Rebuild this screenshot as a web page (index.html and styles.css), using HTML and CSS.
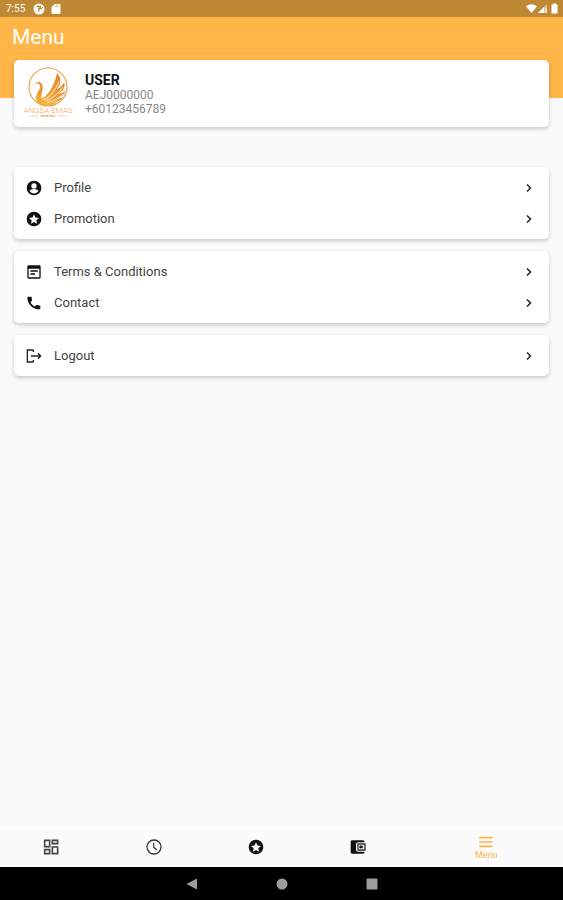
FILE: index.html
```html
<!DOCTYPE html>
<html lang="en">
<head>
<meta charset="utf-8">
<meta name="viewport" content="width=device-width, initial-scale=1">
<title>Menu</title>
<link rel="stylesheet" href="styles.css">
</head>
<body>
<div class="status">
  <span class="time">7:55</span>
  <svg class="status-icon" viewBox="0 0 12 12"><circle cx="6" cy="6" r="5.500" fill="#fff"/><path d="M3.500 3.500h4v2H5.800v3.200" fill="none" stroke="#bf8834" stroke-width="1.300"/><path d="M8 6.500L10 4" stroke="#bf8834"/></svg>
  <svg class="status-icon sd" viewBox="0 0 12 12"><path d="M4.500 1H9.500Q10.500 1 10.500 2V10Q10.500 11 9.500 11H2.500Q1.500 11 1.500 10V4Z" fill="#fff"/><path d="M4.700 2.500v1.500M6.500 2.500v1.500M8.300 2.500v1.500" stroke="#bf8834" stroke-width=".7"/></svg>
  <svg class="signals" viewBox="0 0 34 12"><path d="M1 3.500Q6.500-.8 12 3.500L6.500 10Z" fill="#fff"/><path d="M22 1V10H13Z" fill="#fff" opacity=".5"/><path d="M19 4V10H13Z" fill="#fff"/><path d="M21 5v5" stroke="#fff"/><path d="M26.500 1.500h1.500V.5h3v1h1.500V10.500h-6Z" fill="#fff"/></svg>
</div>
<header class="header"><h1>Menu</h1></header>
<main class="content">
  <section class="card user">
    <svg class="logo" viewBox="0 0 52 52" role="img" aria-label="Angsa Emas">
      <defs><linearGradient id="gold" x1="0" y1="1" x2="1" y2="0"><stop offset="0" stop-color="#f6bd45"/><stop offset="1" stop-color="#e07a1f"/></linearGradient></defs>
      <circle cx="25" cy="20" r="19" fill="none" stroke="#efa04a" stroke-width="1.200"/>
      <path d="M11 20Q13 15 16 17C20 20 13 25 13 31C13 36 18 40 25 39C17 36 18 29 19 25C21 20 19 14 15 15Q12 16 11 20Z" fill="url(#gold)"/>
      <path d="M18 32C23 30 31 21 34 6C39 12 38 17 34 22C37 21 40 18 41 15C43 20 40 24 35 27Q39 27 42 24C42 28 38 31 33 31Q37 32 40 30C37 35 33 35 30 35Q33 37 36 35C31 41 23 40 18 36Z" fill="url(#gold)"/>
      <path d="M21 33Q31 28 36 14M23 34Q33 30 40 20M24 36Q33 34 41 27" fill="none" stroke="#fff" stroke-width=".8"/>
      <text class="logo-name" x="25" y="46" text-anchor="middle">ANGSA EMAS</text>
      <path d="M6 49H16M34 49H44" stroke="#f3bd85" stroke-width=".7"/>
      <path d="M18 49H32" stroke="#efa04a" stroke-width="1.500" stroke-dasharray="2 .6"/>
    </svg>
    <div class="user-text">
      <h2>USER</h2>
      <p>AEJ0000000</p>
      <p>+60123456789</p>
    </div>
  </section>

  <nav class="groups" aria-label="Account">
    <div class="card list">
      <a class="row" href="#profile"><svg class="icon" viewBox="0 0 24 24"><path d="M12 1a11 11 0 1 0 0 22a11 11 0 0 0 0-22Zm0 4a4 4 0 1 1 0 8a4 4 0 0 1 0-8Zm0 15.200c-2.800 0-5.300-1.400-6.700-3.600c.1-2 4.500-3.100 6.700-3.100s6.600 1.100 6.700 3.100c-1.400 2.200-3.900 3.600-6.700 3.600Z"/></svg><span>Profile</span><svg class="chevron" viewBox="0 0 10 10"><path d="M3 1.500L6.500 5L3 8.500"/></svg></a>
      <a class="row" href="#promotion"><svg class="icon" viewBox="0 0 24 24"><path fill-rule="evenodd" d="M12 1a11 11 0 1 0 0 22a11 11 0 0 0 0-22Zm0 4l2.100 4.900l5.400.5l-4.100 3.500l1.200 5.300l-4.600-2.800l-4.600 2.800l1.200-5.300l-4.100-3.500l5.400-.5Z"/></svg><span>Promotion</span><svg class="chevron" viewBox="0 0 10 10"><path d="M3 1.500L6.500 5L3 8.500"/></svg></a>
    </div>
    <div class="card list">
      <a class="row" href="#terms"><svg class="icon" viewBox="0 0 24 24"><path fill-rule="evenodd" d="M4 2H20Q22 2 22 4V20Q22 22 20 22H4Q2 22 2 20V4Q2 2 4 2ZM4 7V20H20V7ZM6.500 9.500H17.500V11.500H6.500ZM6.500 14H13.500V16H6.500Z"/></svg><span>Terms &amp; Conditions</span><svg class="chevron" viewBox="0 0 10 10"><path d="M3 1.500L6.500 5L3 8.500"/></svg></a>
      <a class="row" href="#contact"><svg class="icon" viewBox="0 0 24 24"><path d="M6.600 10.800c1.500 2.900 3.800 5.200 6.600 6.600l2.200-2.200c.3-.3.700-.4 1-.2c1.200.4 2.400.6 3.600.6c.6 0 1.500.4 1.500 1V20c0 .9-.5 1.500-1.500 1.500C10.600 21.500 2 13.400 2 4c0-1 .6-1.500 1.500-1.500H7.500c.6 0 1 .9 1 1.500c0 1.200.2 2.400.6 3.600c.1.300 0 .7-.3 1Z"/></svg><span>Contact</span><svg class="chevron" viewBox="0 0 10 10"><path d="M3 1.500L6.500 5L3 8.500"/></svg></a>
    </div>
    <div class="card list">
      <a class="row" href="#logout"><svg class="icon" viewBox="0 0 24 24"><path d="M11 3H2V21H11M11 18v3M11 3V6M7.500 12H22M18 8l4 4l-4 4" fill="none" stroke="#222" stroke-width="2"/></svg><span>Logout</span><svg class="chevron" viewBox="0 0 10 10"><path d="M3 1.500L6.500 5L3 8.500"/></svg></a>
    </div>
  </nav>
</main>
<nav class="tabs" aria-label="Main">
  <a class="tab" href="#home" aria-label="Dashboard"><svg class="icon" viewBox="0 0 24 24"><path d="M2.500 2H10V11.500H2.500ZM14 2H22V7H14ZM14 12H22V22H14ZM2.500 16H10V22H2.500Z" fill="none" stroke="#444" stroke-width="2.400"/></svg></a>
  <a class="tab" href="#history" aria-label="History"><svg class="icon" viewBox="0 0 24 24"><circle cx="12" cy="12" r="10.500" fill="none" stroke="#333" stroke-width="1.900"/><path d="M11.500 5.500V12.500L16.500 16" fill="none" stroke="#333" stroke-width="1.700"/></svg></a>
  <a class="tab" href="#rewards" aria-label="Promotion"><svg class="icon" viewBox="0 0 24 24"><path fill-rule="evenodd" d="M12 1a11 11 0 1 0 0 22a11 11 0 0 0 0-22Zm0 4l2.100 4.900l5.400.5l-4.100 3.500l1.200 5.300l-4.600-2.800l-4.600 2.800l1.200-5.300l-4.100-3.500l5.400-.5Z"/></svg></a>
  <a class="tab" href="#wallet" aria-label="Wallet"><svg class="icon" viewBox="0 0 24 24"><path d="M3 2H19Q22 2 22 5H12Q9 5 9 8V16Q9 19 12 19H22Q22 22 19 22H3Q1 22 1 20V4Q1 2 3 2Z"/><path d="M12 7.500H22.500V16.500H12Z" fill="none" stroke="#333" stroke-width="2"/><circle cx="16" cy="12" r="2.200"/><path d="M19 10v4" stroke="#333" stroke-width="1.500"/></svg></a>
  <a class="tab active" href="#menu" aria-current="page"><svg class="icon" viewBox="0 0 24 24"><path d="M2 5.500H22M2 12H22M2 18.500H22" stroke="#ffb547" stroke-width="2.600"/></svg><span>Menu</span></a>
</nav>
<div class="system">
  <button type="button" aria-label="Back"><svg viewBox="0 0 12 12"><path d="M11 .5V11.500L.5 6Z"/></svg></button>
  <button type="button" aria-label="Home"><svg viewBox="0 0 12 12"><circle cx="6" cy="6" r="5.500"/></svg></button>
  <button type="button" aria-label="Recent apps"><svg viewBox="0 0 12 12"><rect x=".5" y=".5" width="11" height="11" rx="1"/></svg></button>
</div>
</body>
</html>
```
FILE: styles.css
```css
* {
  box-sizing: border-box;
}

body {
  margin: 0;
  min-height: 100vh;
  display: flex;
  flex-direction: column;
  background: #fafafa;
  color: #444;
  font-family: Roboto, "Liberation Sans", sans-serif;
}

h1, h2, p {
  margin: 0;
  font-weight: 400;
}

a {
  color: inherit;
  text-decoration: none;
}

svg {
  display: block;
  flex: none;
}

.status {
  display: flex;
  align-items: center;
  gap: 5px;
  height: 17px;
  padding: 0 4px 0 6px;
  background: #bf8834;
  color: #fff;
}

.time {
  margin-right: 3px;
  font-size: 10px;
  line-height: 16px;
}

.status-icon {
  width: 12px;
  height: 12px;
}

.signals {
  width: 34px;
  height: 12px;
  margin-left: auto;
}

.header {
  height: 81px;
  padding: 8px 12px;
  background: #ffb547;
  color: #fff;
}

.header h1 {
  font-size: 21px;
  line-height: 24px;
}

.content {
  flex: 1;
  margin-top: -38px;
  padding: 0 14px;
}

.card {
  background: #fff;
  border-radius: 5px;
  box-shadow: 0 2px 4px rgba(0, 0, 0, .2);
}

.user {
  display: flex;
  align-items: center;
  gap: 10px;
  padding: 7px 9px 8px;
}

.logo {
  width: 52px;
  height: 52px;
}

.logo-name {
  fill: #efa566;
  font-size: 8px;
  font-weight: 300;
}

.user-text {
  padding-top: 2px;
  color: #888;
  font-size: 12px;
  line-height: 14px;
}

.user-text h2 {
  color: #111;
  font-size: 14px;
  font-weight: 700;
  line-height: 16px;
}

.groups {
  display: flex;
  flex-direction: column;
  gap: 12px;
  margin-top: 40px;
}

.list {
  padding: 5px 12px;
}

.row {
  display: flex;
  align-items: center;
  gap: 12px;
  height: 31px;
  font-size: 13px;
  line-height: 16px;
}

.icon {
  width: 16px;
  height: 16px;
  fill: #111;
}

.chevron {
  width: 10px;
  height: 10px;
  margin-left: auto;
  margin-right: 3px;
  fill: none;
  stroke: #222;
  stroke-width: 1.5;
}

.tabs {
  display: flex;
  height: 42px;
  border-top: 1px solid #f5f5f5;
  background: #fbfbfb;
}

.tab {
  flex: 2;
  display: flex;
  flex-direction: column;
  align-items: center;
  justify-content: center;
}

.tab.active {
  flex: 3;
  color: #ffb547;
  font-size: 9px;
  line-height: 10px;
}

.system {
  display: flex;
  justify-content: center;
  gap: 66px;
  height: 33px;
  background: #000;
}

.system button {
  width: 24px;
  padding: 0 6px;
  border: 0;
  background: none;
}

.system svg {
  width: 12px;
  height: 12px;
  fill: #9c9c9c;
}
```
